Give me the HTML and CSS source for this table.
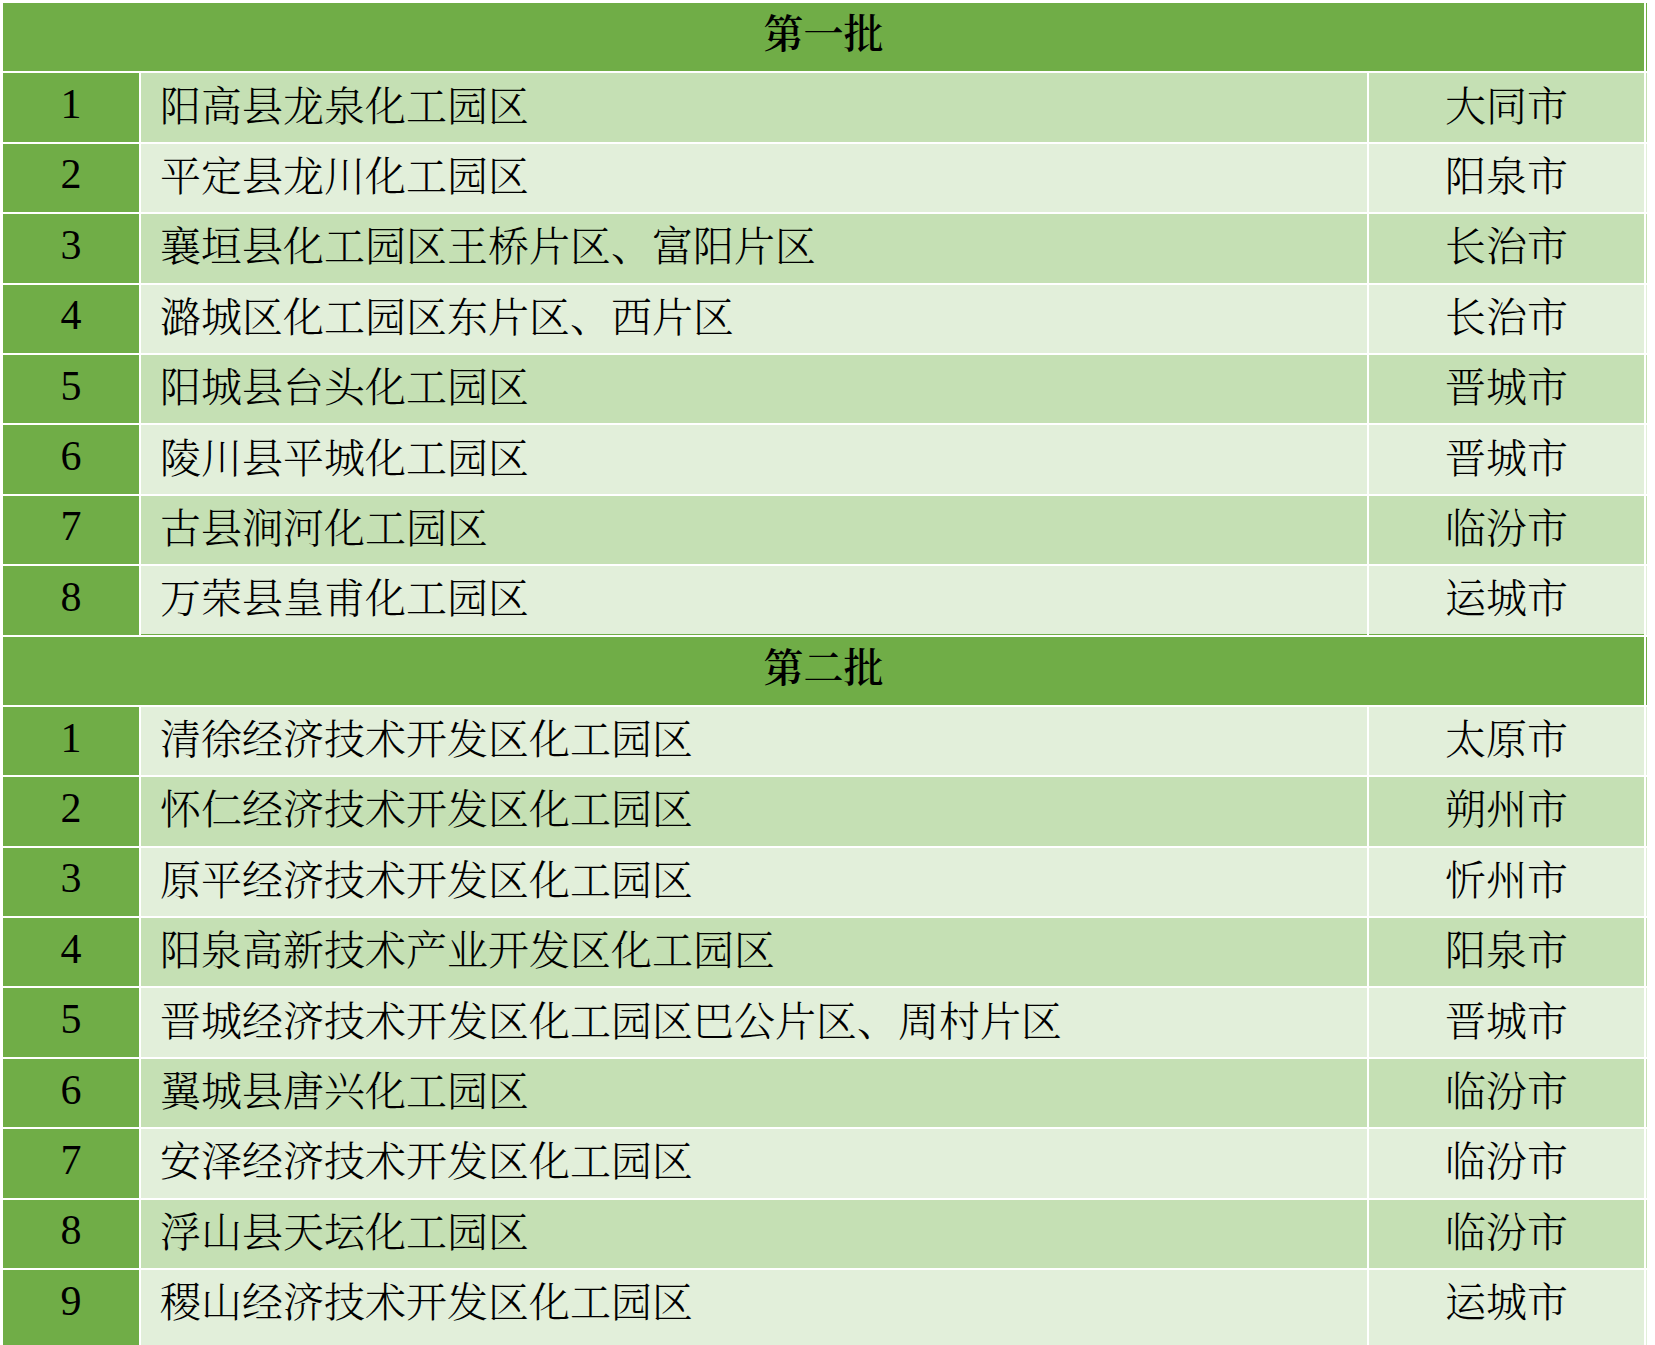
FILE: index.html
```html
<!DOCTYPE html>
<html lang="zh-CN">
<head>
<meta charset="utf-8">
<title>化工园区名单</title>
<link rel="stylesheet" href="styles.css">
</head>
<body>
<table class="parks">
  <colgroup>
    <col class="c-num"><col class="c-name"><col class="c-city"><col class="c-edge">
  </colgroup>
  <tbody>
    <tr class="batch"><th colspan="3">第一批</th><td class="edge"></td></tr>
    <tr class="dark"><td class="num">1</td><td class="name">阳高县龙泉化工园区</td><td class="city">大同市</td><td class="edge"></td></tr>
    <tr class="light"><td class="num">2</td><td class="name">平定县龙川化工园区</td><td class="city">阳泉市</td><td class="edge"></td></tr>
    <tr class="dark"><td class="num">3</td><td class="name">襄垣县化工园区王桥片区、富阳片区</td><td class="city">长治市</td><td class="edge"></td></tr>
    <tr class="light"><td class="num">4</td><td class="name">潞城区化工园区东片区、西片区</td><td class="city">长治市</td><td class="edge"></td></tr>
    <tr class="dark"><td class="num">5</td><td class="name">阳城县台头化工园区</td><td class="city">晋城市</td><td class="edge"></td></tr>
    <tr class="light"><td class="num">6</td><td class="name">陵川县平城化工园区</td><td class="city">晋城市</td><td class="edge"></td></tr>
    <tr class="dark"><td class="num">7</td><td class="name">古县涧河化工园区</td><td class="city">临汾市</td><td class="edge"></td></tr>
    <tr class="light last"><td class="num">8</td><td class="name">万荣县皇甫化工园区</td><td class="city">运城市</td><td class="edge"></td></tr>
    <tr class="batch"><th colspan="3">第二批</th><td class="edge"></td></tr>
    <tr class="light"><td class="num">1</td><td class="name">清徐经济技术开发区化工园区</td><td class="city">太原市</td><td class="edge"></td></tr>
    <tr class="dark"><td class="num">2</td><td class="name">怀仁经济技术开发区化工园区</td><td class="city">朔州市</td><td class="edge"></td></tr>
    <tr class="light"><td class="num">3</td><td class="name">原平经济技术开发区化工园区</td><td class="city">忻州市</td><td class="edge"></td></tr>
    <tr class="dark"><td class="num">4</td><td class="name">阳泉高新技术产业开发区化工园区</td><td class="city">阳泉市</td><td class="edge"></td></tr>
    <tr class="light"><td class="num">5</td><td class="name">晋城经济技术开发区化工园区巴公片区、周村片区</td><td class="city">晋城市</td><td class="edge"></td></tr>
    <tr class="dark"><td class="num">6</td><td class="name">翼城县唐兴化工园区</td><td class="city">临汾市</td><td class="edge"></td></tr>
    <tr class="light"><td class="num">7</td><td class="name">安泽经济技术开发区化工园区</td><td class="city">临汾市</td><td class="edge"></td></tr>
    <tr class="dark"><td class="num">8</td><td class="name">浮山县天坛化工园区</td><td class="city">临汾市</td><td class="edge"></td></tr>
    <tr class="light tail"><td class="num">9</td><td class="name">稷山经济技术开发区化工园区</td><td class="city">运城市</td><td class="edge"></td></tr>
  </tbody>
</table>
</body>
</html>
```
FILE: styles.css
```css
html, body {
  margin: 0;
  padding: 0;
  background: #ffffff;
}

body {
  padding: 1px 0 0 1px;
  font-family: "Noto Serif CJK SC", "Source Han Serif SC", "Noto Sans CJK SC", serif;
  color: #000000;
}

.parks {
  table-layout: fixed;
  border-collapse: separate;
  border-spacing: 2px;
  width: 1648px;
}

.c-num { width: 136px; }
.c-name { width: 1226px; }
.c-city { width: 275px; }
.c-edge { width: 1px; }

.parks th,
.parks td {
  height: 68.4px;
  padding: 0 0 9px 0;
  box-sizing: border-box;
  vertical-align: middle;
  font-size: 41px;
  font-weight: 300;
  line-height: 1;
  white-space: nowrap;
  overflow: hidden;
}

.batch th {
  background: #70ad47;
  font-weight: 600;
  font-size: 40px;
  text-align: center;
  padding-bottom: 12px;
}

.batch .edge { background: #70ad47; }

.dark td { background: #c5e0b4; }
.light td { background: #e2efda; }

.parks td.num {
  background: #70ad47;
  text-align: center;
  font-family: "Liberation Serif", "Times New Roman", serif;
  font-weight: 400;
  font-size: 42px;
  padding-bottom: 7px;
}

.parks td.name {
  text-align: left;
  padding-left: 19px;
}

.parks td.city {
  text-align: center;
}

.parks td.edge {
  padding: 0;
}

.parks .tail td {
  height: 76px;
  padding-bottom: 16.6px;
}

.parks .tail td.num {
  padding-bottom: 14.6px;
}

.parks .tail td.edge {
  padding: 0;
}

.last td.name,
.last td.city {
  box-shadow: inset 0 -1px 0 #70ad47;
}
```
